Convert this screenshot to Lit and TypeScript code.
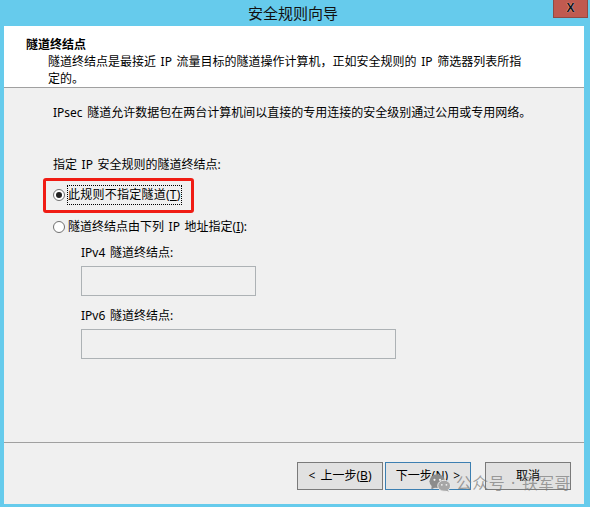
import { LitElement, css, html } from "lit";
import { customElement } from "lit/decorators.js";

@customElement("app-root")
export class AppRoot extends LitElement {
  render() {
    return html`
      <div class="window">
        <div class="titlebar">
          <span class="title">安全规则向导</span>
          <div class="close">X</div>
        </div>
        <div class="client">
          <div class="header">
            <div class="heading">隧道终结点</div>
            <div class="desc">隧道终结点是最接近 IP 流量目标的隧道操作计算机，正如安全规则的 IP 筛选器列表所指定的。</div>
          </div>
          <div class="body">
            <div class="intro">IPsec 隧道允许数据包在两台计算机间以直接的专用连接的安全级别通过公用或专用网络。</div>
            <div class="group-label">指定 IP 安全规则的隧道终结点:</div>
            <div class="radio-row first">
              <span class="radio checked"></span>
              <span class="focus">此规则不指定隧道(<u>T</u>)</span>
            </div>
            <div class="radio-row second">
              <span class="radio"></span>
              <span class="plain">隧道终结点由下列 IP 地址指定(<u>I</u>):</span>
            </div>
            <div class="fields">
              <div class="field-label">IPv4 隧道终结点:</div>
              <div class="input v4"></div>
              <div class="field-label lower">IPv6 隧道终结点:</div>
              <div class="input v6"></div>
            </div>
          </div>
          <div class="footer">
            <button class="btn">&lt; 上一步(<u>B</u>)</button>
            <button class="btn default">下一步(<u>N</u>)&nbsp;&gt;</button>
            <button class="btn cancel">取消</button>
          </div>
        </div>
      </div>
      <div class="highlight"></div>
      <div class="watermark">
        <svg width="22" height="20" viewBox="0 0 24 20">
          <ellipse cx="9" cy="8" rx="8.5" ry="7.5" fill="#8c8c8c"></ellipse>
          <path d="M3 12 L2.5 17 L8 14Z" fill="#8c8c8c"></path>
          <ellipse cx="16.5" cy="13" rx="7" ry="6" fill="#a6a6a6" stroke="#f0f0f0" stroke-width="1"></ellipse>
          <path d="M20 17 L22 19.5 L17 18Z" fill="#a6a6a6"></path>
          <circle cx="6" cy="6.5" r="1.2" fill="#f0f0f0"></circle>
          <circle cx="12" cy="6.5" r="1.2" fill="#f0f0f0"></circle>
          <circle cx="14" cy="12" r="1" fill="#f0f0f0"></circle>
          <circle cx="19" cy="12" r="1" fill="#f0f0f0"></circle>
        </svg>
        <span>公众号 · 铁军哥</span>
      </div>
    `;
  }

  static styles = css`
    :host {
      display: block;
      position: relative;
      width: 590px;
      height: 507px;
      overflow: hidden;
      background: #66cbec;
      color: #000;
      font-family: "Noto Sans", "Noto Sans CJK SC", sans-serif;
      font-size: 12px;
      line-height: 17px;
      word-spacing: 1.5px;
    }
    u {
      text-underline-offset: 1px;
    }
    .window {
      display: flex;
      flex-direction: column;
      height: 504px;
      padding: 0 6px 0 4px;
      box-sizing: border-box;
    }
    .titlebar {
      position: relative;
      height: 26px;
      flex: none;
      display: flex;
      justify-content: center;
      align-items: center;
      padding-right: 2px;
    }
    .title {
      font-size: 15px;
      line-height: 22px;
      color: #111;
    }
    .close {
      position: absolute;
      top: 0;
      right: -4px;
      width: 35px;
      height: 18px;
      background: #c05a50;
      border: 1px solid #8f4a44;
      border-top: none;
      box-sizing: border-box;
      display: flex;
      align-items: center;
      justify-content: center;
      font-family: "Liberation Sans", sans-serif;
      font-size: 12px;
      font-weight: 700;
      color: #111;
      text-shadow: 0 0 1px #fff;
    }
    .client {
      flex: 1;
      display: flex;
      flex-direction: column;
      background: #f0f0f0;
    }
    .header {
      height: 62px;
      flex: none;
      box-sizing: border-box;
      padding: 10px 58px 0 22px;
      background: #fff;
      border-bottom: 1px solid #a0a0a0;
    }
    .heading {
      font-weight: 700;
    }
    .desc {
      padding-left: 22px;
      overflow: hidden;
    }
    .body {
      flex: 1;
      padding: 16px 0 0 49px;
    }
    .group-label {
      margin-top: 35px;
    }
    .radio-row {
      display: flex;
      align-items: center;
      gap: 3px;
      height: 19px;
    }
    .radio-row.first {
      margin-top: 12px;
    }
    .radio-row.second {
      margin-top: 13px;
    }
    .radio {
      width: 10px;
      height: 10px;
      flex: none;
      border: 1px solid #707070;
      border-radius: 50%;
      background: #fff;
      position: relative;
    }
    .radio.checked::after {
      content: "";
      position: absolute;
      inset: 2px;
      border-radius: 50%;
      background: #222;
    }
    .focus {
      outline: 1px dotted #000;
      padding: 0 0 1px;
      letter-spacing: 0.25px;
      white-space: nowrap;
    }
    .fields {
      padding: 8px 0 0 28px;
    }
    .input {
      box-sizing: border-box;
      height: 30px;
      margin-top: 5px;
      border: 1px solid #adb2b5;
    }
    .input.v4 {
      width: 175px;
    }
    .input.v6 {
      width: 315px;
    }
    .field-label.lower {
      margin-top: 11px;
    }
    .footer {
      flex: none;
      height: 62px;
      box-sizing: border-box;
      border-top: 1px solid #a0a0a0;
      display: flex;
      padding: 19px 0 0 293px;
      gap: 2px;
    }
    .btn {
      width: 86px;
      height: 28px;
      box-sizing: border-box;
      padding: 0 0 2px;
      background: #e1e1e1;
      border: 1px solid #7a7a7a;
      border-radius: 0;
      font: inherit;
      word-spacing: 2px;
      color: #000;
    }
    .btn.default {
      border-color: #3c7fb1;
      background: #e3e3e3;
    }
    .btn.cancel {
      margin-left: 12px;
    }
    .highlight {
      position: absolute;
      left: 43px;
      top: 178px;
      width: 151px;
      height: 35px;
      box-sizing: border-box;
      border: 3px solid #f01c14;
      border-radius: 3px;
    }
    .watermark {
      position: absolute;
      left: 429px;
      top: 473px;
      display: flex;
      align-items: center;
      gap: 5px;
      font-size: 16px;
      line-height: 20px;
      letter-spacing: 0.35px;
      color: rgba(120, 120, 120, 0.7);
      white-space: nowrap;
    }
  `;
}
